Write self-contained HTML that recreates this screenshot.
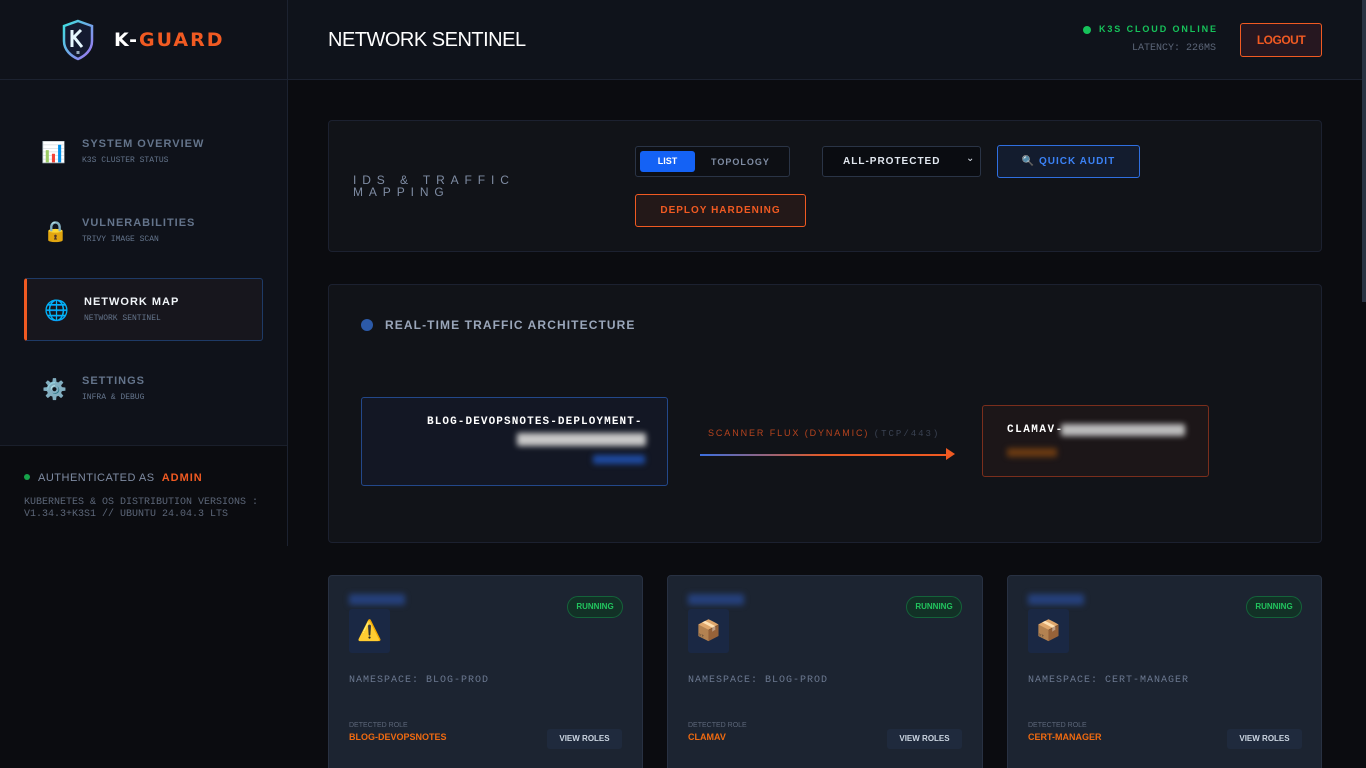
<!DOCTYPE html>
<html><head><meta charset="utf-8">
<style>
*{margin:0;padding:0;box-sizing:border-box}
html,body{width:1366px;height:768px;overflow:hidden}
body{background:#0b0c10;font-family:"Liberation Sans",sans-serif;position:relative;color:#cbd5e1}
.abs{position:absolute}
.mono{font-family:"Liberation Mono",monospace}
.side{left:0;top:0;width:288px;height:546px;border-right:1px solid #1c2230;background:#0f121a}
.sidetop{left:0;top:0;width:287px;height:80px;border-bottom:1px solid #1c2230;background:#0f121a}
.sidefoot{left:0;top:445px;width:287px;height:101px;background:#0b0c10;border-top:1px solid #1a1f2b}
.hdr{left:288px;top:0;width:1074px;height:80px;background:#0f131b;border-bottom:1px solid #1c2230}
.nav .t{font-size:11px;font-weight:bold;letter-spacing:1px;color:#64748b}
.nav .s{font-size:8px;color:#64748b;font-family:"Liberation Mono",monospace;margin-top:6px}
.ic{font-size:20px;font-family:"DejaVu Sans",sans-serif}
.panel{background:#111318;border:1px solid #1c2130;border-radius:4px}
.card{background:#1c2431;border:1px solid #283142;border-radius:4px;height:200px}
.blur{filter:blur(3px);border-radius:2px}
.run{border:1px solid #14633a;background:#123126;color:#22c55e;font-size:8px;font-weight:bold;border-radius:11px;width:56px;height:22px;line-height:20px;text-align:center}
.vr{background:#1f2a3d;color:#cbd5e1;font-size:8px;font-weight:bold;width:75px;height:20px;line-height:20px;text-align:center;border-radius:3px}
</style></head><body>
<div class="abs side"></div>
<div class="abs sidetop"></div>
<svg class="abs" style="left:61px;top:19px" width="34" height="42" viewBox="0 0 34 42">
<defs><linearGradient id="g" x1="0" y1="0" x2="1" y2="1"><stop offset="0" stop-color="#3ee0e0"/><stop offset="1" stop-color="#a070f0"/></linearGradient></defs>
<path d="M17 2 L31 7 V22 C31 31 24 37 17 40 C10 37 3 31 3 22 V7 Z" fill="#141a30" stroke="url(#g)" stroke-width="2.5"/>
<path d="M11 11 V28 M11 20 L20 11 M13 18 L21 28" stroke="#e6f7ff" stroke-width="3" fill="none"/>
<rect x="15.5" y="32" width="3" height="3" fill="#9ab"/>
</svg>
<div class="abs" style="left:114px;top:29px;font-size:19px;font-weight:bold;letter-spacing:2px;color:#fff;font-family:'DejaVu Sans',sans-serif">K-<span style="color:#f05a22">GUARD</span></div>

<div class="nav">
<div class="abs ic" style="left:41px;top:140px">📊</div>
<div class="abs" style="left:82px;top:138px"><div class="t">SYSTEM OVERVIEW</div><div class="s">K3S CLUSTER STATUS</div></div>
<div class="abs ic" style="left:43px;top:219px">🔒</div>
<div class="abs" style="left:82px;top:217px"><div class="t">VULNERABILITIES</div><div class="s">TRIVY IMAGE SCAN</div></div>
<div class="abs" style="left:24px;top:278px;width:239px;height:63px;border:1px solid #1e3a66;border-left:3px solid #f05a22;border-radius:3px;background:#17161d"></div>
<div class="abs ic" style="left:44px;top:298px">🌐</div>
<div class="abs" style="left:84px;top:296px"><div class="t" style="color:#f1f5f9">NETWORK MAP</div><div class="s">NETWORK SENTINEL</div></div>
<div class="abs ic" style="left:42px;top:377px">⚙️</div>
<div class="abs" style="left:82px;top:375px"><div class="t">SETTINGS</div><div class="s">INFRA &amp; DEBUG</div></div>
</div>

<div class="abs sidefoot"></div>
<div class="abs" style="left:24px;top:474px;width:6px;height:6px;border-radius:50%;background:#16a34a"></div>
<div class="abs" style="left:38px;top:472px;font-size:11px;letter-spacing:.5px;color:#7f8ca3">AUTHENTICATED AS &nbsp;<b style="color:#f05a22;letter-spacing:1px">ADMIN</b></div>
<div class="abs mono" style="left:24px;top:497px;font-size:10px;line-height:12px;color:#5c6678">KUBERNETES &amp; OS DISTRIBUTION VERSIONS :<br>V1.34.3+K3S1 // UBUNTU 24.04.3 LTS</div>

<div class="abs hdr"></div>
<div class="abs" style="left:328px;top:29px;font-size:20px;color:#fff;letter-spacing:-.5px">NETWORK SENTINEL</div>
<div class="abs" style="left:1083px;top:26px;width:8px;height:8px;border-radius:50%;background:#16c25a"></div>
<div class="abs" style="left:1099px;top:24px;font-size:9px;font-weight:bold;letter-spacing:1.9px;color:#16c25a">K3S CLOUD ONLINE</div>
<div class="abs mono" style="left:1132px;top:43px;font-size:10px;color:#5c6678">LATENCY: 226MS</div>
<div class="abs" style="left:1240px;top:23px;width:82px;height:34px;border:1px solid #f05a22;border-radius:3px;background:#261720;color:#f05a22;font-size:12px;font-weight:bold;text-align:center;line-height:32px;letter-spacing:-.5px">LOGOUT</div>
<div class="abs" style="left:1362px;top:0;width:4px;height:302px;background:#2a3342"></div>

<div class="abs panel" style="left:328px;top:120px;width:994px;height:132px"></div>
<div class="abs" style="left:353px;top:174px;font-size:12px;letter-spacing:5.9px;line-height:12px;color:#7f8ca3">IDS &amp; TRAFFIC<br>MAPPING</div>
<div class="abs" style="left:635px;top:146px;width:155px;height:31px;border:1px solid #2a3446;border-radius:3px;background:#0d0f14"></div>
<div class="abs" style="left:640px;top:151px;width:55px;height:21px;background:#1462f5;border-radius:3px;color:#fff;font-size:9px;font-weight:bold;text-align:center;line-height:21px">LIST</div>
<div class="abs" style="left:711px;top:157px;font-size:9px;font-weight:bold;letter-spacing:1px;color:#7f8ca3">TOPOLOGY</div>
<div class="abs" style="left:822px;top:146px;width:159px;height:31px;border:1px solid #2a3446;border-radius:3px;background:#0a0c11"></div>
<div class="abs" style="left:843px;top:156px;font-size:10px;font-weight:bold;letter-spacing:1px;color:#e2e8f0">ALL-PROTECTED</div>
<div class="abs" style="left:966px;top:153px;font-size:10px;color:#e2e8f0">⌄</div>
<div class="abs" style="left:997px;top:145px;width:143px;height:33px;border:1px solid #2f6fe0;border-radius:3px;background:#131c2e;color:#3b82f6;font-size:10px;font-weight:bold;letter-spacing:1px;text-align:center;line-height:31px">🔍 QUICK AUDIT</div>
<div class="abs" style="left:635px;top:194px;width:171px;height:33px;border:1px solid #f05a22;border-radius:3px;background:#231818;color:#f05a22;font-size:10px;font-weight:bold;letter-spacing:1px;text-align:center;line-height:31px">DEPLOY HARDENING</div>

<div class="abs panel" style="left:328px;top:284px;width:994px;height:259px"></div>
<div class="abs" style="left:361px;top:319px;width:12px;height:12px;border-radius:50%;background:#2c5aa8"></div>
<div class="abs" style="left:385px;top:318px;font-size:12px;font-weight:bold;letter-spacing:1.1px;color:#9aa6ba">REAL-TIME TRAFFIC ARCHITECTURE</div>

<div class="abs" style="left:361px;top:397px;width:307px;height:89px;border:1px solid #23488a;border-radius:3px;background:#131724"></div>
<div class="abs mono" style="left:427px;top:416px;font-size:11px;font-weight:bold;letter-spacing:1.1px;color:#fff">BLOG-DEVOPSNOTES-DEPLOYMENT-</div>
<div class="abs blur" style="left:517px;top:433px;width:129px;height:13px;background:#c8c8c8"></div>
<div class="abs blur" style="left:593px;top:455px;width:52px;height:9px;background:#1e4aa0"></div>

<div class="abs" style="left:708px;top:428px;font-size:9px;letter-spacing:1.9px;color:#b8441e">SCANNER FLUX (DYNAMIC) <span class="mono" style="color:#3a4252;letter-spacing:2px">(TCP/443)</span></div>
<div class="abs" style="left:700px;top:454px;width:248px;height:2px;background:linear-gradient(90deg,#3b6fe0,#e35a26 50%,#f05a22)"></div>
<div class="abs" style="left:946px;top:448px;width:0;height:0;border-left:9px solid #f05a22;border-top:6px solid transparent;border-bottom:6px solid transparent"></div>

<div class="abs" style="left:982px;top:405px;width:227px;height:72px;border:1px solid #7a2e1c;border-radius:3px;background:#1c1618"></div>
<div class="abs mono" style="left:1007px;top:424px;font-size:11px;font-weight:bold;letter-spacing:1.5px;color:#fff">CLAMAV-</div>
<div class="abs blur" style="left:1061px;top:424px;width:124px;height:12px;background:#bdbdbd"></div>
<div class="abs blur" style="left:1007px;top:448px;width:50px;height:9px;background:#6a3a12"></div>

<div class="abs card" style="left:328px;top:575px;width:315px"></div>
<div class="abs card" style="left:667px;top:575px;width:316px"></div>
<div class="abs card" style="left:1007px;top:575px;width:315px"></div>

<div class="abs blur" style="left:349px;top:594px;width:56px;height:11px;background:#25407a"></div>
<div class="abs" style="left:349px;top:609px;width:41px;height:44px;background:#1a2844;border-radius:3px;text-align:center;line-height:44px;font-size:20px">⚠️</div>
<div class="abs run" style="left:567px;top:596px">RUNNING</div>
<div class="abs mono" style="left:349px;top:675px;font-size:10px;letter-spacing:1px;color:#6b7890">NAMESPACE: BLOG-PROD</div>
<div class="abs" style="left:349px;top:722px;font-size:7px;color:#5c6678">DETECTED ROLE</div>
<div class="abs" style="left:349px;top:732px;font-size:9px;font-weight:bold;color:#f06a10">BLOG-DEVOPSNOTES</div>
<div class="abs vr" style="left:547px;top:729px">VIEW ROLES</div>

<div class="abs blur" style="left:688px;top:594px;width:56px;height:11px;background:#25407a"></div>
<div class="abs" style="left:688px;top:609px;width:41px;height:44px;background:#1a2844;border-radius:3px;text-align:center;line-height:44px;font-size:20px">📦</div>
<div class="abs run" style="left:906px;top:596px">RUNNING</div>
<div class="abs mono" style="left:688px;top:675px;font-size:10px;letter-spacing:1px;color:#6b7890">NAMESPACE: BLOG-PROD</div>
<div class="abs" style="left:688px;top:722px;font-size:7px;color:#5c6678">DETECTED ROLE</div>
<div class="abs" style="left:688px;top:732px;font-size:9px;font-weight:bold;color:#f06a10">CLAMAV</div>
<div class="abs vr" style="left:887px;top:729px">VIEW ROLES</div>

<div class="abs blur" style="left:1028px;top:594px;width:56px;height:11px;background:#25407a"></div>
<div class="abs" style="left:1028px;top:609px;width:41px;height:44px;background:#1a2844;border-radius:3px;text-align:center;line-height:44px;font-size:20px">📦</div>
<div class="abs run" style="left:1246px;top:596px">RUNNING</div>
<div class="abs mono" style="left:1028px;top:675px;font-size:10px;letter-spacing:1px;color:#6b7890">NAMESPACE: CERT-MANAGER</div>
<div class="abs" style="left:1028px;top:722px;font-size:7px;color:#5c6678">DETECTED ROLE</div>
<div class="abs" style="left:1028px;top:732px;font-size:9px;font-weight:bold;color:#f06a10">CERT-MANAGER</div>
<div class="abs vr" style="left:1227px;top:729px">VIEW ROLES</div>
</body></html>
